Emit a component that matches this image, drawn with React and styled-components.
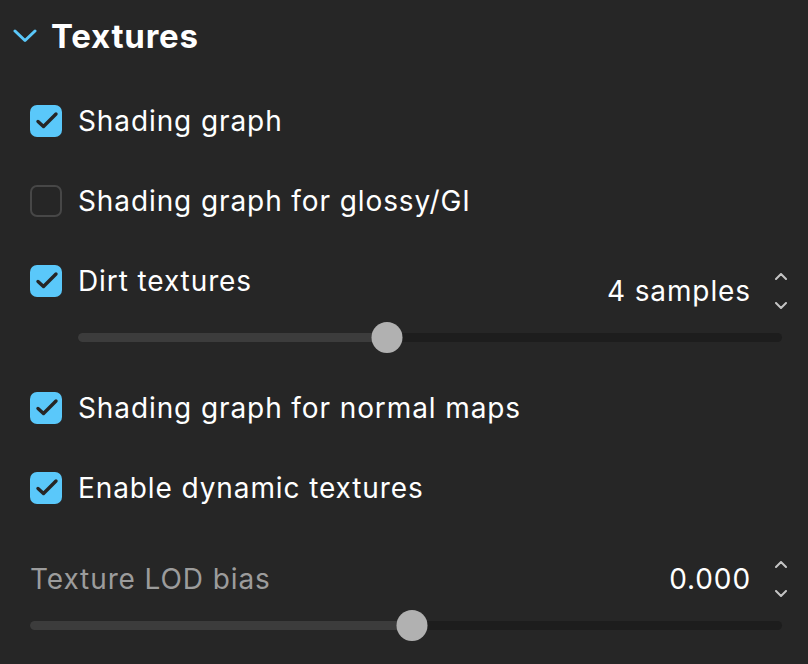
import React from 'react';
import styled, { createGlobalStyle } from 'styled-components';

const GlobalStyle = createGlobalStyle`
  html, body {
    margin: 0;
    padding: 0;
    background: #262626;
  }
  body {
    font-family: Inter, "Noto Sans", sans-serif;
    color: #ffffff;
  }
`;

const Panel = styled.section`
  width: 808px;
  height: 664px;
  box-sizing: border-box;
  background: #262626;
  overflow: hidden;
`;

const Header = styled.div`
  display: flex;
  align-items: center;
  height: 72px;
  padding-left: 13px;
  gap: 14px;

  h2 {
    margin: 0;
    font-size: 33px;
    font-weight: 700;
    letter-spacing: 0.8px;
  }
`;

const Body = styled.div`
  padding: 9px 26px 0 30px;
`;

const Row = styled.div`
  display: flex;
  align-items: center;
  height: 80px;
`;

const CheckLabel = styled.label`
  display: flex;
  align-items: center;
  gap: 16px;
  font-size: 28px;
  letter-spacing: 0.9px;
  line-height: 32px;
  color: #ffffff;
`;

const Box = styled.span`
  width: 32px;
  height: 32px;
  box-sizing: border-box;
  border-radius: 7px;
  flex: none;
  display: flex;
  align-items: center;
  justify-content: center;
  background: ${(p) => (p.$checked ? '#5ac8fa' : 'transparent')};
  border: ${(p) => (p.$checked ? 'none' : '2.5px solid #474747')};
`;

const Block = styled.div`
  padding: ${(p) => p.$top}px 0 ${(p) => p.$bottom}px;
`;

const TopLine = styled.div`
  display: flex;
  justify-content: space-between;
  align-items: flex-start;
`;

const FieldLabel = styled.span`
  font-size: 28px;
  letter-spacing: 0.9px;
  line-height: 36px;
  color: #9c9c9c;
`;

const Spin = styled.div`
  display: flex;
  align-items: center;
  gap: 24px;
  margin: ${(p) => p.$offset || 0}px -5px 0 0;

  span {
    font-size: 28px;
    letter-spacing: 0.9px;
    line-height: 36px;
    color: #ffffff;
  }
`;

const Arrows = styled.div`
  display: flex;
  flex-direction: column;
  justify-content: space-between;
  height: 36px;
  width: 12px;
`;

const SliderWrap = styled.div`
  position: relative;
  height: 30px;
  margin: 13px 0 0 ${(p) => p.$indent || 0}px;
  display: flex;
  align-items: center;
`;

const Track = styled.div`
  position: relative;
  width: 100%;
  height: 9px;
  border-radius: 5px;
  background: #1d1d1d;
  overflow: hidden;
`;

const Fill = styled.div`
  height: 100%;
  background: #3c3c3c;
`;

const Knob = styled.div`
  position: absolute;
  top: 0;
  width: 31px;
  height: 31px;
  border-radius: 50%;
  background: #b1b1b1;
  transform: translateX(-50%);
`;

const Chevron = () => (
  <svg width="24" height="14" viewBox="0 0 24 14">
    <path d="M2 2 L12 11.5 L22 2" fill="none" stroke="#5ac8fa" strokeWidth="3" strokeLinecap="round" strokeLinejoin="round" />
  </svg>
);

const Tick = () => (
  <svg width="32" height="32" viewBox="0 0 32 32">
    <path d="M9 22.5 L14.5 27.5 M14.5 27.5 L27 15" transform="translate(-1 -6)" fill="none" stroke="#262626" strokeWidth="3.4" strokeLinecap="round" strokeLinejoin="round" />
  </svg>
);

const Caret = ({ down }) => (
  <svg width="12" height="7" viewBox="0 0 12 7">
    <path d={down ? 'M1 1 L6 6 L11 1' : 'M1 6 L6 1 L11 6'} fill="none" stroke="#c4c4c4" strokeWidth="2" strokeLinecap="round" strokeLinejoin="round" />
  </svg>
);

const Check = ({ checked, children }) => (
  <CheckLabel>
    <Box $checked={checked}>{checked && <Tick />}</Box>
    {children}
  </CheckLabel>
);

const Value = ({ value, offset }) => (
  <Spin $offset={offset}>
    <span>{value}</span>
    <Arrows>
      <Caret />
      <Caret down />
    </Arrows>
  </Spin>
);

const Slider = ({ pct, indent }) => (
  <SliderWrap $indent={indent}>
    <Track>
      <Fill style={{ width: `${pct}%` }} />
    </Track>
    <Knob style={{ left: `${pct}%` }} />
  </SliderWrap>
);

const App = () => {
  return (
    <Panel>
      <GlobalStyle />
      <Header>
        <Chevron />
        <h2>Textures</h2>
      </Header>
      <Body>
        <Row>
          <Check checked>Shading graph</Check>
        </Row>
        <Row>
          <Check>Shading graph for glossy/GI</Check>
        </Row>
        <Block $top={24} $bottom={16}>
          <TopLine>
            <Check checked>Dirt textures</Check>
            <Value value="4 samples" offset={8} />
          </TopLine>
          <Slider pct={43.9} indent={48} />
        </Block>
        <Row>
          <Check checked>Shading graph for normal maps</Check>
        </Row>
        <Row>
          <Check checked>Enable dynamic textures</Check>
        </Row>
        <Block $top={33} $bottom={0}>
          <TopLine>
            <FieldLabel>Texture LOD bias</FieldLabel>
            <Value value="0.000" />
          </TopLine>
          <Slider pct={50.8} />
        </Block>
      </Body>
    </Panel>
  );
};

export default App;
